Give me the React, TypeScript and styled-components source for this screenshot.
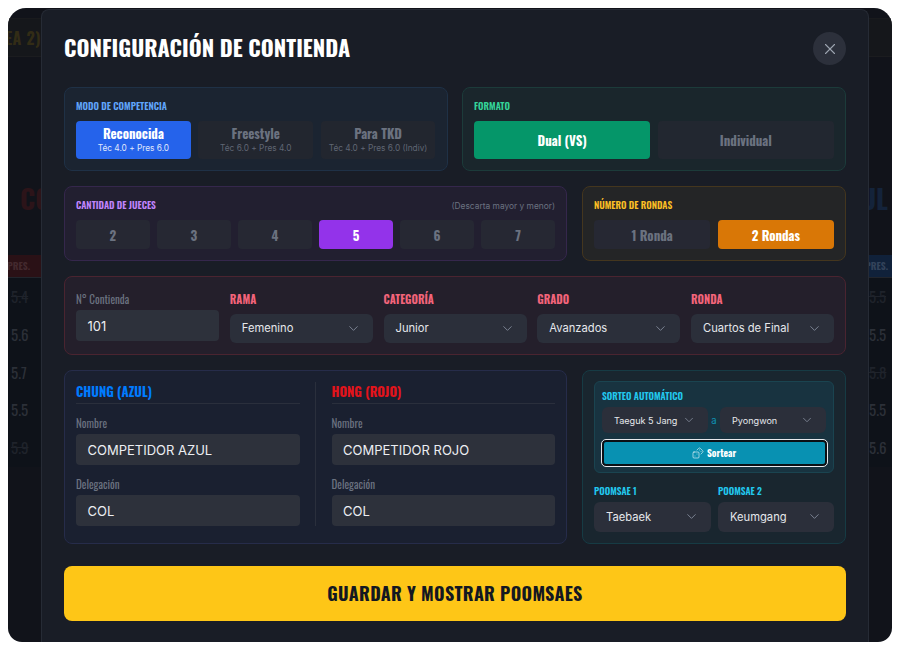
import styled, { createGlobalStyle } from "styled-components";
import { ChevronDown, Dices, X } from "lucide-react";

const GlobalStyle = createGlobalStyle`
  html, body {
    margin: 0;
    padding: 0;
    background: #ffffff;
  }
  * {
    box-sizing: border-box;
  }
`;

const display = `Oswald, "Open Sans", sans-serif`;
const ui = `Inter, "Liberation Sans", sans-serif`;

const leftScores = [
  { value: "5.4", out: true },
  { value: "5.6" },
  { value: "5.7" },
  { value: "5.5" },
  { value: "5.9", out: true },
];
const rightScores = [
  { value: "5.5", out: true },
  { value: "5.5" },
  { value: "5.8", out: true },
  { value: "5.5" },
  { value: "5.6" },
];

function Select({ value, small }: { value: string; small?: boolean }) {
  return (
    <SelectBox $small={small}>
      <span>{value}</span>
      <ChevronDown size={small ? 14 : 15} strokeWidth={1.5} color="#7f8796" />
    </SelectBox>
  );
}

export default function App() {
  return (
    <>
      <GlobalStyle />
      <Frame>
        <Side $side="left">
          <TopStrip>
            <TopText>(AREA 2)</TopText>
          </TopStrip>
          <SideName $side="left">COL</SideName>
          <PresHead $side="left">PRES.</PresHead>
          <ScoreList>
            {leftScores.map((s, i) => (
              <Score key={i} $out={s.out} $side="left">{s.value}</Score>
            ))}
          </ScoreList>
        </Side>

        <Modal>
          <Header>
            <Title>CONFIGURACIÓN DE CONTIENDA</Title>
            <CloseButton><X size={18} strokeWidth={1.5} /></CloseButton>
          </Header>

          <Equal>
            <Panel $tone="blue">
              <PanelLabel $color="#60a5fa">MODO DE COMPETENCIA</PanelLabel>
              <Options>
                <ModeButton $bg="#2563eb">
                  <ModeName>Reconocida</ModeName>
                  <ModeHint>Téc 4.0 + Pres 6.0</ModeHint>
                </ModeButton>
                <ModeButton>
                  <ModeName>Freestyle</ModeName>
                  <ModeHint>Téc 6.0 + Pres 4.0</ModeHint>
                </ModeButton>
                <ModeButton>
                  <ModeName>Para TKD</ModeName>
                  <ModeHint>Téc 4.0 + Pres 6.0 (Indiv)</ModeHint>
                </ModeButton>
              </Options>
            </Panel>
            <Panel $tone="green">
              <PanelLabel $color="#34d399">FORMATO</PanelLabel>
              <Options>
                <BigOption $bg="#059669">Dual (VS)</BigOption>
                <BigOption>Individual</BigOption>
              </Options>
            </Panel>
          </Equal>

          <Wide>
            <Panel $tone="purple">
              <LabelRow>
                <PanelLabel $color="#c084fc">CANTIDAD DE JUECES</PanelLabel>
                <Note>(Descarta mayor y menor)</Note>
              </LabelRow>
              <Options>
                {["2", "3", "4", "5", "6", "7"].map((n) => (
                  <SmallOption key={n} $bg={n === "5" ? "#9333ea" : undefined}>{n}</SmallOption>
                ))}
              </Options>
            </Panel>
            <Panel $tone="amber">
              <LabelRow>
                <PanelLabel $color="#fbbf24">NÚMERO DE RONDAS</PanelLabel>
              </LabelRow>
              <Options>
                <SmallOption>1 Ronda</SmallOption>
                <SmallOption $bg="#d97706">2 Rondas</SmallOption>
              </Options>
            </Panel>
          </Wide>

          <Panel $tone="red">
            <Fields>
              <Field>
                <FieldLabel>N° Contienda</FieldLabel>
                <TextBox>101</TextBox>
              </Field>
              <Field>
                <RedLabel>RAMA</RedLabel>
                <Select value="Femenino" />
              </Field>
              <Field>
                <RedLabel>CATEGORÍA</RedLabel>
                <Select value="Junior" />
              </Field>
              <Field>
                <RedLabel>GRADO</RedLabel>
                <Select value="Avanzados" />
              </Field>
              <Field>
                <RedLabel>RONDA</RedLabel>
                <Select value="Cuartos de Final" />
              </Field>
            </Fields>
          </Panel>

          <Wide>
            <Panel $tone="navy">
              <Competitors>
                <Competitor>
                  <CompetitorTitle $color="#007bff">CHUNG (AZUL)</CompetitorTitle>
                  <FieldLabel>Nombre</FieldLabel>
                  <TextBox>COMPETIDOR AZUL</TextBox>
                  <FieldLabel>Delegación</FieldLabel>
                  <TextBox>COL</TextBox>
                </Competitor>
                <Divider />
                <Competitor>
                  <CompetitorTitle $color="#e3131b">HONG (ROJO)</CompetitorTitle>
                  <FieldLabel>Nombre</FieldLabel>
                  <TextBox>COMPETIDOR ROJO</TextBox>
                  <FieldLabel>Delegación</FieldLabel>
                  <TextBox>COL</TextBox>
                </Competitor>
              </Competitors>
            </Panel>
            <Panel $tone="cyan">
              <DrawBox>
                <CyanLabel>SORTEO AUTOMÁTICO</CyanLabel>
                <DrawRange>
                  <Select value="Taeguk 5 Jang" small />
                  <RangeWord>a</RangeWord>
                  <Select value="Pyongwon" small />
                </DrawRange>
                <DrawButton>
                  <Dices size={12} strokeWidth={1.2} />
                  Sortear
                </DrawButton>
              </DrawBox>
              <PoomsaeRow>
                <Field>
                  <CyanLabel>POOMSAE 1</CyanLabel>
                  <Select value="Taebaek" />
                </Field>
                <Field>
                  <CyanLabel>POOMSAE 2</CyanLabel>
                  <Select value="Keumgang" />
                </Field>
              </PoomsaeRow>
            </Panel>
          </Wide>

          <SaveButton>GUARDAR Y MOSTRAR POOMSAES</SaveButton>
        </Modal>

        <Side $side="right">
          <TopStrip />
          <SideName $side="right">AZUL</SideName>
          <PresHead $side="right">PRES.</PresHead>
          <ScoreList>
            {rightScores.map((s, i) => (
              <Score key={i} $out={s.out} $side="right">{s.value}</Score>
            ))}
          </ScoreList>
        </Side>
      </Frame>
    </>
  );
}

const Frame = styled.div`
  display: flex;
  width: 884px;
  height: 634px;
  margin: 8px;
  border-radius: 18px 18px 14px 14px;
  overflow: hidden;
  background: #11131a;
`;

const Side = styled.div<{ $side: "left" | "right" }>`
  width: ${({ $side }) => ($side === "left" ? "33px" : "23px")};
  flex-shrink: 0;
  display: flex;
  flex-direction: column;
  overflow: hidden;
`;

const TopStrip = styled.div`
  height: 39px;
  margin-top: 10px;
  flex-shrink: 0;
  display: flex;
  align-items: center;
  justify-content: flex-end;
  background: #15171b;
  border-top: 1px solid #191a1d;
  border-bottom: 1px solid #1b1c1f;
  overflow: hidden;
`;

const TopText = styled.span`
  font: 700 16px ${display};
  letter-spacing: 0.5px;
  color: #322c16;
  white-space: nowrap;
  flex-shrink: 0;
`;

const SideName = styled.div<{ $side: "left" | "right" }>`
  display: flex;
  justify-content: ${({ $side }) => ($side === "left" ? "flex-start" : "flex-end")};
  height: 60px;
  margin-top: 111px;
  padding: ${({ $side }) => ($side === "left" ? "0 0 0 12px" : "0 4px 0 0")};
  flex-shrink: 0;
  font: 700 27px/60px ${display};
  color: ${({ $side }) => ($side === "left" ? "#2c1419" : "#14233a")};
  white-space: nowrap;
`;

const PresHead = styled.div<{ $side: "left" | "right" }>`
  display: flex;
  justify-content: flex-end;
  margin-top: 27px;
  height: 23px;
  flex-shrink: 0;
  padding-right: ${({ $side }) => ($side === "left" ? "11px" : "4px")};
  font: 700 9.6px/22px ${display};
  color: ${({ $side }) => ($side === "left" ? "#43292e" : "#33435a")};
  background: ${({ $side }) => ($side === "left" ? "#2a1116" : "#10213a")};
  border-bottom: 1px solid #22252c;
  white-space: nowrap;
`;

const ScoreList = styled.div`
  height: 189px;
  background: #0e1219;
  flex-shrink: 0;
`;

const Score = styled.div<{ $out?: boolean; $side: "left" | "right" }>`
  height: 37.75px;
  padding-left: ${({ $side }) => ($side === "left" ? "3px" : "0")};
  font: 400 15px/37.75px ${display};
  color: ${({ $out }) => ($out ? "#1f232b" : "#2c3038")};
  text-decoration: ${({ $out }) => ($out ? "line-through" : "none")};
`;

const Modal = styled.div`
  flex: 1;
  min-width: 0;
  margin-top: 1px;
  padding: 22px 22px 0;
  display: flex;
  flex-direction: column;
  gap: 15px;
  background: #191d26;
  border: 1px solid #262b35;
  border-bottom: 0;
  border-radius: 8px 8px 0 0;
`;

const Header = styled.div`
  display: flex;
  align-items: center;
  justify-content: space-between;
  height: 33px;
  margin-bottom: 7px;
`;

const Title = styled.h1`
  margin: -2px 0 0;
  font: 700 22.2px/33px ${display};
  color: #ffffff;
`;

const CloseButton = styled.button`
  width: 33px;
  height: 33px;
  padding: 0;
  border: 0;
  border-radius: 50%;
  display: flex;
  align-items: center;
  justify-content: center;
  background: #2c303b;
  color: #9ca3af;
`;

const Equal = styled.div`
  display: grid;
  grid-template-columns: 383.5px 384px;
  justify-content: space-between;
`;

const Wide = styled.div`
  display: grid;
  grid-template-columns: 503px 264px;
  justify-content: space-between;
`;

const tones = {
  blue: ["#1b2431", "#1f3146"],
  green: ["#1a262c", "#1c3b3a"],
  purple: ["#221f30", "#35274c"],
  amber: ["#242526", "#44361e"],
  red: ["#241f2b", "#4a2430"],
  navy: ["#1a2030", "#262c4a"],
  cyan: ["#19262f", "#163b44"],
};

const Panel = styled.section<{ $tone: keyof typeof tones }>`
  padding: 11px;
  border-radius: 8px;
  background: ${({ $tone }) => tones[$tone][0]};
  border: 1px solid ${({ $tone }) => tones[$tone][1]};
`;

const PanelLabel = styled.div<{ $color: string }>`
  font: 600 9.5px/14px ${display};
  color: ${({ $color }) => $color};
  margin-bottom: 8px;
`;

const LabelRow = styled.div`
  display: flex;
  justify-content: space-between;
  align-items: baseline;
`;

const Note = styled.span`
  font: 400 8.4px/14px ${ui};
  color: #6b7280;
`;

const Options = styled.div`
  display: flex;
  gap: 7.5px;
`;

const ModeButton = styled.div<{ $bg?: string }>`
  flex: 1;
  height: 38px;
  display: flex;
  flex-direction: column;
  align-items: center;
  justify-content: center;
  border-radius: 4px;
  background: ${({ $bg }) => $bg ?? "#22262f"};
  color: ${({ $bg }) => ($bg ? "#ffffff" : "#6b7280")};
`;

const ModeName = styled.span`
  font: 700 13px/15px ${display};
  margin-bottom: 2px;
`;

const ModeHint = styled.span`
  font: 400 8.3px/11px ${ui};
  white-space: nowrap;
  opacity: 0.85;
`;

const BigOption = styled.div<{ $bg?: string }>`
  flex: 1;
  height: 38px;
  display: flex;
  align-items: center;
  justify-content: center;
  border-radius: 4px;
  font: 700 13px ${display};
  background: ${({ $bg }) => $bg ?? "#222730"};
  color: ${({ $bg }) => ($bg ? "#ffffff" : "#6b7280")};
`;

const SmallOption = styled.div<{ $bg?: string }>`
  flex: 1;
  height: 29px;
  display: flex;
  align-items: center;
  justify-content: center;
  border-radius: 4px;
  font: 700 13px ${display};
  background: ${({ $bg }) => $bg ?? "#262833"};
  color: ${({ $bg }) => ($bg ? "#ffffff" : "#6b7280")};
`;

const Fields = styled.div`
  display: grid;
  grid-template-columns: repeat(5, 143px);
  justify-content: space-between;
  align-items: start;
`;

const Field = styled.div`
  display: flex;
  flex-direction: column;
  min-width: 0;
`;

const FieldLabel = styled.label`
  font: 400 11px/22px ${display};
  color: #6b7280;
`;

const RedLabel = styled.label`
  font: 700 11px/22px ${display};
  color: #f3647a;
  margin-bottom: 3.5px;
`;

const CyanLabel = styled.label`
  font: 600 9.5px/14px ${display};
  color: #22c8ee;
  margin-bottom: 4px;
`;

const TextBox = styled.div`
  height: 31px;
  padding: 0 11.5px;
  display: flex;
  align-items: center;
  border-radius: 4px;
  font: 400 13px ${ui};
  color: #eceef2;
  background: #2d313b;
  margin-bottom: 8px;
  &:last-child {
    margin-bottom: 0;
  }
`;

const SelectBox = styled.div<{ $small?: boolean }>`
  height: ${({ $small }) => ($small ? "26px" : "29.5px")};
  ${({ $small }) => ($small ? "flex: 1;" : "")}
  min-width: 0;
  padding: 0 12px;
  display: flex;
  align-items: center;
  justify-content: space-between;
  border-radius: 6px;
  font: 400 ${({ $small }) => ($small ? "9.1px" : "11.2px")} ${ui};
  color: #e5e7eb;
  background: #2b2f3a;
  white-space: nowrap;
`;

const Competitors = styled.div`
  display: flex;
  gap: 15.5px;
`;

const Competitor = styled.div`
  flex: 1;
  min-width: 0;
  display: flex;
  flex-direction: column;
`;

const Divider = styled.div`
  width: 1px;
  background: #2a2f3c;
`;

const CompetitorTitle = styled.div<{ $color: string }>`
  font: 700 13px/18px ${display};
  color: ${({ $color }) => $color};
  padding-bottom: 3px;
  border-bottom: 1px solid #2a2f3c;
  margin-bottom: 8px;
`;

const DrawBox = styled.div`
  padding: 7px 7px 6px;
  border-radius: 6px;
  background: #183340;
  border: 1px solid #1a4450;
  display: flex;
  flex-direction: column;
  margin: -1px 0 11px;
`;

const DrawRange = styled.div`
  display: flex;
  align-items: center;
  margin-bottom: 7px;
`;

const RangeWord = styled.span`
  width: 12px;
  text-align: center;
  font: 400 9.5px ${ui};
  color: #0e93b5;
`;

const DrawButton = styled.button`
  height: 26px;
  margin: 0 -0.5px;
  padding: 0;
  display: flex;
  align-items: center;
  justify-content: center;
  gap: 3px;
  border-radius: 4px;
  border: 2px solid #0b0f14;
  outline: 1px solid #e5e7eb;
  background: #0891b2;
  color: #ffffff;
  font: 700 9.6px ${display};
`;

const PoomsaeRow = styled.div`
  display: grid;
  grid-template-columns: 117px 116px;
  justify-content: space-between;
`;

const SaveButton = styled.button`
  height: 55px;
  margin-top: 7.5px;
  padding-bottom: 3px;
  flex-shrink: 0;
  border: 0;
  border-radius: 8px;
  background: #fec617;
  color: #141821;
  font: 700 18px ${display};
  letter-spacing: 0.3px;
`;
